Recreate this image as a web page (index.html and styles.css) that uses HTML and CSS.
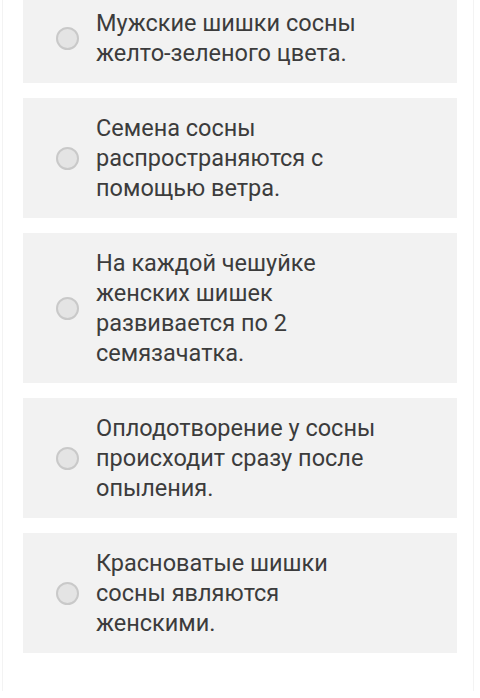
FILE: index.html
```html
<!DOCTYPE html>
<html lang="ru">
<head>
  <meta charset="UTF-8" />
  <meta name="viewport" content="width=device-width, initial-scale=1.0" />
  <title>Сосна</title>
  <link rel="stylesheet" href="styles.css">
</head>
<body>
  <div class="sheet">
    <div class="options">
      <label class="option">
        <span class="radio"></span>
        <span class="text">Мужские шишки сосны желто-зеленого цвета.</span>
      </label>
      <label class="option">
        <span class="radio"></span>
        <span class="text">Семена сосны распространяются с помощью ветра.</span>
      </label>
      <label class="option">
        <span class="radio"></span>
        <span class="text">На каждой чешуйке женских шишек развивается по 2 семязачатка.</span>
      </label>
      <label class="option">
        <span class="radio"></span>
        <span class="text">Оплодотворение у сосны происходит сразу после опыления.</span>
      </label>
      <label class="option">
        <span class="radio"></span>
        <span class="text">Красноватые шишки сосны являются женскими.</span>
      </label>
    </div>
  </div>
</body>
</html>
```

FILE: styles.css
```css
html, body {
  margin: 0;
  padding: 0;
  background: #fff;
  font-family: Roboto, "Noto Sans", sans-serif;
  color: #3c3c3c;
  height: 100%;
  overflow: hidden;
}

.sheet {
  margin-left: 2px;
  width: 472px;
  height: 100%;
  border-left: 1px solid #f3f3f3;
  border-right: 1px solid #f3f3f3;
  box-sizing: border-box;
}

.options {
  display: flex;
  flex-direction: column;
  gap: 15px;
  margin-top: -7px;
  padding-left: 20px;
}

.option {
  width: 434px;
  box-sizing: border-box;
  background: #f2f2f2;
  display: flex;
  align-items: center;
  padding: 15px 60px 15px 33px;
  cursor: pointer;
}

.radio {
  flex: none;
  width: 23px;
  height: 23px;
  border-radius: 50%;
  box-sizing: border-box;
  background: #e4e4e4;
  border: 2px solid #c9c9c9;
  margin-right: 17px;
}

.text {
  font-size: 23.5px;
  line-height: 30px;
  max-width: 292px;
}
```
